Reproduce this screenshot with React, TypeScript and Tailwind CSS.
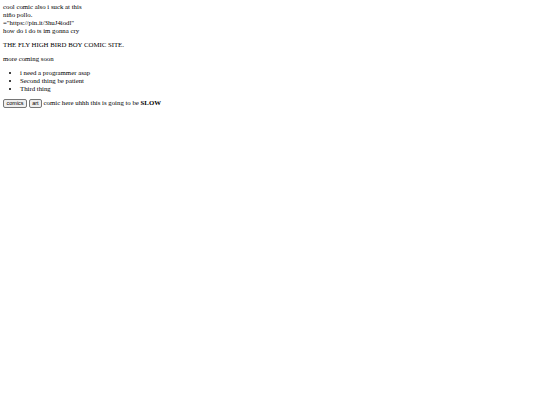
export default function App() {
  return (
    <div className="min-h-[405px] bg-white px-[3px] pt-[2.5px] text-[6.8px] leading-[8px] text-black" style={{ fontFamily: '"Liberation Serif", serif' }}>
      <div>
        cool comic also i suck at this
        <br />
        niño pollo.
        <br />
        ="https://pin.it/3huJ4iodl"
        <br />
        how do i do ts im gonna cry
      </div>
      <p className="my-[6px]">THE FLY HIGH BIRD BOY COMIC SITE.</p>
      <p className="my-[6px]">more coming soon</p>
      <ul className="my-[6px] list-disc pl-[17px]">
        <li>i need a programmer asap</li>
        <li>Second thing be patient</li>
        <li>Third thing</li>
      </ul>
      <div className="flex items-center">
        <button className="mr-[1.5px] rounded-[2px] border border-[#767676] bg-[#efefef] px-[2.5px] py-[0.5px] text-[5.5px] leading-[6.5px]" style={{ fontFamily: '"Liberation Sans", sans-serif' }}>
          comics
        </button>
        <button className="mr-[1.5px] rounded-[2px] border border-[#767676] bg-[#efefef] px-[2.5px] py-[0.5px] text-[5.5px] leading-[6.5px]" style={{ fontFamily: '"Liberation Sans", sans-serif' }}>
          art
        </button>
        <span>
          comic here uhhh this is going to be <b>SLOW</b>
        </span>
      </div>
    </div>
  );
}
